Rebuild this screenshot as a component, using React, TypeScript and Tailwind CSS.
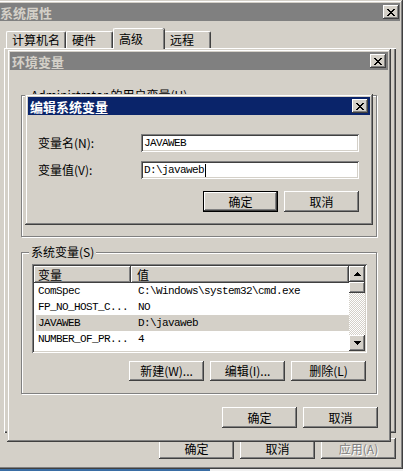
import React from "react";

const raised =
  "shadow-[inset_-1px_-1px_#404040,inset_1px_1px_#ffffff,inset_-2px_-2px_#808080,inset_2px_2px_#d4d0c8]";
const sunken =
  "shadow-[inset_1px_1px_#808080,inset_-1px_-1px_#ffffff,inset_2px_2px_#404040,inset_-2px_-2px_#d4d0c8]";
const frame =
  "shadow-[inset_-1px_-1px_#404040,inset_1px_1px_#d4d0c8,inset_-2px_-2px_#808080,inset_2px_2px_#ffffff]";
const cjk = "font-['Noto_Sans_CJK_SC',sans-serif] text-[12px]";
const mono = "font-['Liberation_Mono',monospace] text-[11px] tracking-[-0.6px]";

const CloseBtn = () => (
  <div className={`w-[16px] h-[14px] bg-[#d4d0c8] ${raised} flex items-center justify-center`}>
    <svg width="8" height="7" viewBox="0 0 8 7" shapeRendering="crispEdges">
      <path
        d="M0 0h2v1H0zM6 0h2v1H6zM1 1h2v1H1zM5 1h2v1H5zM2 2h4v1H2zM3 3h2v1H3zM2 4h4v1H2zM1 5h2v1H1zM5 5h2v1H5zM0 6h2v1H0zM6 6h2v1H6z"
        fill="#000"
      />
    </svg>
  </div>
);

const TitleBar = ({ title, active, pl = "pl-[2px]", pr = "pr-[2px]" }: { title: string; active: boolean; pl?: string; pr?: string }) => (
  <div
    className={`h-[18px] flex items-center justify-between ${pl} ${pr} ${
      active ? "bg-[#0a246a] text-white" : "bg-[#808080] text-[#d4d0c8]"
    }`}
  >
    <span className="font-['Noto_Sans_CJK_SC',sans-serif] text-[13px] font-bold leading-none">{title}</span>
    <CloseBtn />
  </div>
);

const Btn = ({
  label,
  w = "w-[75px]",
  h = "h-[21px]",
  isDefault,
  disabled,
}: {
  label?: string;
  w?: string;
  h?: string;
  isDefault?: boolean;
  disabled?: boolean;
}) => (
  <div className={`${w} ${h} ${isDefault ? "border border-black" : ""}`}>
    <div
      className={`w-full h-full bg-[#d4d0c8] ${raised} flex items-center justify-center ${cjk} ${
        disabled ? "text-[#808080] [text-shadow:1px_1px_#ffffff]" : "text-black"
      }`}
    >
      {label}
    </div>
  </div>
);

const Arrow = ({ down }: { down?: boolean }) => (
  <svg width="7" height="4" viewBox="0 0 7 4" shapeRendering="crispEdges" className={down ? "rotate-180" : ""}>
    <path d="M3 0h1v1H3zM2 1h3v1H2zM1 2h5v1H1zM0 3h7v1H0z" fill="#000" />
  </svg>
);

type Row = { name: string; value: string; selected?: boolean };

const ListView = ({ rows, covered }: { rows: Row[]; covered?: boolean }) => (
  <div className={`w-[335px] h-[89px] bg-white ${sunken} p-[2px] flex`}>
    <div className="flex-1 flex flex-col overflow-hidden">
      <div className="flex h-[17px] shrink-0">
        <div className={`w-[97px] bg-[#d4d0c8] ${raised} flex items-center pl-[4px] ${cjk}`}>{covered ? "" : "变量"}</div>
        <div className={`flex-1 bg-[#d4d0c8] ${raised} flex items-center pl-[6px] ${cjk}`}>{covered ? "" : "值"}</div>
      </div>
      {rows.map((r) => (
        <div key={r.name} className={`flex h-[16px] shrink-0 items-center ml-[2px] ${r.selected ? "bg-[#d4d0c8]" : ""}`}>
          <div className={`w-[95px] pl-[2px] ${mono} text-black whitespace-nowrap`}>{r.name}</div>
          <div className={`flex-1 pl-[7px] ${mono} text-black whitespace-nowrap`}>{r.value}</div>
        </div>
      ))}
    </div>
    <div className="w-[16px] flex flex-col">
      <div className={`h-[16px] bg-[#d4d0c8] ${raised} flex items-center justify-center`}>
        <Arrow />
      </div>
      <div className={`h-[11px] bg-[#d4d0c8] ${raised}`} />
      <div className="flex-1 bg-[repeating-conic-gradient(#d4d0c8_0%_25%,#ffffff_0%_50%)] bg-[length:2px_2px]" />
      <div className={`h-[16px] bg-[#d4d0c8] ${raised} flex items-center justify-center`}>
        <Arrow down />
      </div>
    </div>
  </div>
);

const VarGroup = ({ label, rows, mt, covered }: { label: string; rows: Row[]; mt: string; covered?: boolean }) => (
  <div
    className={`relative ${mt} ml-[11px] w-[356px] h-[142px] border border-[#808080] shadow-[inset_1px_1px_#ffffff,1px_1px_#ffffff] pt-[11px] pl-[10px] flex flex-col`}
  >
    <span className={`absolute left-[7px] top-[-9px] px-[2px] bg-[#d4d0c8] ${cjk} text-black leading-[16px]`}>{label}</span>
    <ListView rows={rows} covered={covered} />
    <div className="flex justify-end gap-[6px] mt-[8px] pr-[10px]">
      <Btn label={covered ? "" : "新建(W)..."} h="h-[20px]" />
      <Btn label={covered ? "" : "编辑(I)..."} h="h-[20px]" />
      <Btn label={covered ? "" : "删除(L)"} h="h-[20px]" />
    </div>
  </div>
);

const tabs = [
  { label: "计算机名", w: "w-[60px]" },
  { label: "硬件", w: "w-[47px]" },
  { label: "高级", w: "w-[51px]", selected: true },
  { label: "远程", w: "w-[47px]" },
];

export default function App() {
  return (
    <div className="relative w-[403px] h-[471px] overflow-hidden bg-[#d4d0c8] flex flex-col justify-end">
      {/* 系统属性 */}
      <div className={`absolute left-[-3px] top-0 w-[406px] h-[469px] bg-[#d4d0c8] ${frame} p-[3px] flex flex-col`}>
        <TitleBar title="系统属性" active={false} pl="pl-[0px]" pr="pr-[1px]" />
        <div className="h-[27px] flex items-end pl-[6px]">
          {tabs.map((t) =>
            t.selected ? (
              <div
                key={t.label}
                className={`${t.w} h-[21px] mb-[-1px] relative z-10 bg-[#d4d0c8] border-l border-t border-white rounded-tl-[2px] rounded-tr-[2px] shadow-[inset_-1px_0_#808080,1px_0_#404040] flex items-start pt-[1px] pl-[5px] ${cjk}`}
              >
                {t.label}
              </div>
            ) : (
              <div
                key={t.label}
                className={`${t.w} h-[17px] bg-[#d4d0c8] border-l border-t border-white rounded-tl-[2px] rounded-tr-[2px] shadow-[inset_-1px_0_#808080,inset_-2px_0_#d4d0c8] border-r border-r-[#404040] flex items-center pl-[5px] ${cjk}`}
              >
                {t.label}
              </div>
            )
          )}
        </div>
        <div className="ml-[4px] w-[392px] h-[385px] bg-[#d4d0c8] shadow-[inset_1px_1px_#ffffff,inset_-1px_-1px_#404040,inset_-2px_-2px_#808080]" />
        <div className="flex justify-end gap-[6px] mt-[5px] pr-[4px]">
          <Btn label="确定" />
          <Btn label="取消" />
          <Btn label="应用(A)" disabled />
        </div>
      </div>

      {/* 环境变量 */}
      <div className={`absolute left-[7px] top-[49px] w-[384px] h-[393px] bg-[#d4d0c8] ${frame} p-[3px] flex flex-col`}>
        <TitleBar title="环境变量" active={false} />
        <VarGroup label="Administrator 的用户变量(U)" mt="mt-[25px]" rows={[]} covered />
        <VarGroup
          label="系统变量(S)"
          mt="mt-[15px]"
          rows={[
            { name: "ComSpec", value: "C:\\Windows\\system32\\cmd.exe" },
            { name: "FP_NO_HOST_C...", value: "NO" },
            { name: "JAVAWEB", value: "D:\\javaweb", selected: true },
            { name: "NUMBER_OF_PR...", value: "4" },
          ]}
        />
        <div className="flex justify-end gap-[6px] mt-[13px] pr-[10px]">
          <Btn label="确定" />
          <Btn label="取消" />
        </div>
      </div>

      {/* 编辑系统变量 */}
      <div className={`absolute left-[25px] top-[94px] w-[348px] h-[131px] bg-[#d4d0c8] ${frame} p-[3px] flex flex-col`}>
        <TitleBar title="编辑系统变量" active />
        <div className="flex items-center mt-[19px] pl-[10px]">
          <span className={`w-[103px] ${cjk} text-black`}>变量名(N):</span>
          <div className={`w-[218px] h-[18px] bg-white ${sunken} flex items-center pl-[3px] ${mono} text-black`}>JAVAWEB</div>
        </div>
        <div className="flex items-center mt-[9px] pl-[10px]">
          <span className={`w-[103px] ${cjk} text-black`}>变量值(V):</span>
          <div className={`w-[218px] h-[18px] bg-white ${sunken} flex items-center pl-[3px] ${mono} text-black`}>
            D:\javaweb
            <span className="ml-[1px] w-[1px] h-[13px] bg-black" />
          </div>
        </div>
        <div className="flex justify-end gap-[6px] mt-[12px] pr-[11px]">
          <Btn label="确定" isDefault />
          <Btn label="取消" />
        </div>
      </div>

      <div className="h-[2px] flex">
        <div className="w-[210px] bg-[#3a6ea5]" />
        <div className="flex-1 bg-[#f0f0f0]" />
      </div>
    </div>
  );
}
